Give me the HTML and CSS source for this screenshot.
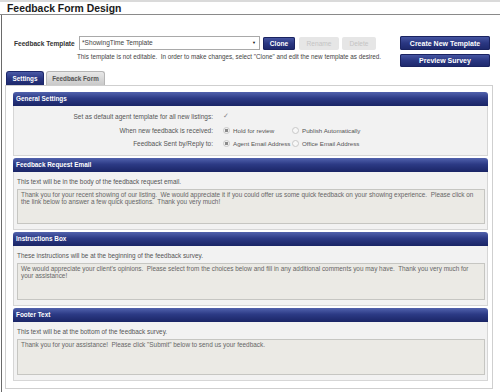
FILE: index.html
```html
<!DOCTYPE html>
<html lang="en">
<head>
    <meta charset="UTF-8">
    <meta name="viewport" content="width=device-width, initial-scale=1.0">
    <title>Feedback Form Design</title>
    <link rel="stylesheet" href="styles.css">
</head>
<body>
    <div class="page">
        <h1 class="page-title">Feedback Form Design</h1>
        <div class="content">
            <!-- template picker -->
            <div class="template-row">
                <div class="template-left">
                    <div class="template-pick">
                        <span class="template-label">Feedback Template</span>
                        <div class="select">*ShowingTime Template<span class="select-arrow">&#9660;</span></div>
                        <button class="btn">Clone</button>
                        <button class="btn btn-disabled btn-rename">Rename</button>
                        <button class="btn btn-disabled btn-delete">Delete</button>
                    </div>
                    <p class="note">This template is not editable.&nbsp; In order to make changes, select "Clone" and edit the new template as desired.</p>
                </div>
                <div class="template-actions">
                    <button class="btn btn-wide">Create New Template</button>
                    <button class="btn btn-wide">Preview Survey</button>
                </div>
            </div>

            <!-- tabs -->
            <div class="tabs">
                <div class="tab tab-active">Settings</div>
                <div class="tab">Feedback Form</div>
            </div>

            <div class="panel">
                <div class="section">
                    <div class="section-head">General Settings</div>
                    <div class="section-body settings">
                        <div class="settings-label">Set as default agent template for all new listings:</div>
                        <div class="settings-value"><span class="check"></span></div>
                        <div class="settings-label">When new feedback is received:</div>
                        <div class="settings-value">
                            <span class="radio radio-on"></span><span class="opt opt-first">Hold for review</span>
                            <span class="radio"></span><span class="opt">Publish Automatically</span>
                        </div>
                        <div class="settings-label">Feedback Sent by/Reply to:</div>
                        <div class="settings-value">
                            <span class="radio radio-on"></span><span class="opt opt-first">Agent Email Address</span>
                            <span class="radio"></span><span class="opt">Office Email Address</span>
                        </div>
                    </div>
                </div>

                <div class="section">
                    <div class="section-head">Feedback Request Email</div>
                    <div class="section-body">
                        <p class="hint">This text will be in the body of the feedback request email.</p>
                        <div class="textbox tb-email">Thank you for your recent showing of our listing.&nbsp; We would appreciate it if you could offer us some quick feedback on your showing experience.&nbsp; Please click on the link below to answer a few quick questions.&nbsp; Thank you very much!</div>
                    </div>
                </div>

                <div class="section">
                    <div class="section-head">Instructions Box</div>
                    <div class="section-body">
                        <p class="hint">These instructions will be at the beginning of the feedback survey.</p>
                        <div class="textbox tb-instr">We would appreciate your client's opinions.&nbsp; Please select from the choices below and fill in any additional comments you may have.&nbsp; Thank you very much for your assistance!</div>
                    </div>
                </div>

                <div class="section">
                    <div class="section-head">Footer Text</div>
                    <div class="section-body">
                        <p class="hint">This text will be at the bottom of the feedback survey.</p>
                        <div class="textbox tb-footer">Thank you for your assistance!&nbsp; Please click "Submit" below to send us your feedback.</div>
                    </div>
                </div>
            </div>
        </div>
    </div>
</body>
</html>
```

FILE: styles.css
```css
/* base */
body {
    margin: 0;
    font-family: "Liberation Sans", Arial, sans-serif;
    background: #ffffff;
    color: #555;
}

.page {
    border-top: 2px solid #dadada;
}

.page-title {
    margin: 0;
    height: 12px;
    padding-left: 7px;
    font-size: 10.4px;
    line-height: 13px;
    font-weight: bold;
    color: #1a1a1a;
    border-bottom: 1px solid #8a8a8a;
}

.content {
    margin-left: 1px;
    border-left: 1px solid #6a6a6a;
    padding: 21px 0 4px 3px;
}

/* template row */
.template-row {
    display: flex;
    align-items: flex-start;
}

.template-left {
    margin-left: 9px;
    width: 384px;
}

.template-pick {
    display: flex;
    align-items: center;
    height: 14px;
}

.template-label {
    font-size: 6.6px;
    font-weight: bold;
    color: #333;
    width: 65px;
}

.select {
    position: relative;
    width: 177px;
    height: 12px;
    border: 1px solid #a9a9a9;
    background: #fff;
    font-size: 6.6px;
    line-height: 12px;
    padding-left: 2px;
    color: #444;
    box-sizing: content-box;
}

.select-arrow {
    position: absolute;
    right: 3px;
    top: 0;
    font-size: 4px;
    color: #111;
}

.btn {
    border: none;
    border-radius: 2px;
    font-family: "Liberation Sans", Arial, sans-serif;
    font-size: 6.6px;
    font-weight: bold;
    color: #fff;
    background: linear-gradient(#4a5aa6, #2a3782 50%, #1c276a);
    height: 13px;
    padding: 0;
    margin-left: 3px;
    width: 32px;
    box-shadow: 0 0 0 1px #1a2360 inset;
}

.btn-disabled {
    background: #e6e6e6;
    color: #c4c4c4;
    box-shadow: none;
    font-weight: normal;
}

.btn-rename {
    width: 40px;
    margin-left: 4px;
}

.btn-delete {
    width: 34px;
}

.note {
    margin: 3px 0 0 63px;
    font-size: 6.3px;
    line-height: 8px;
    color: #444;
    white-space: nowrap;
}

.template-actions {
    display: flex;
    flex-direction: column;
    gap: 4px;
    margin-left: 2px;
}

.btn-wide {
    width: 90px;
    height: 14px;
    margin-left: 0;
    font-size: 7px;
}

.btn-wide + .btn-wide {
    height: 13px;
}

/* tabs */
.tabs {
    display: flex;
    gap: 2px;
    margin: 4px 0 0 1px;
}

.tab {
    height: 14px;
    line-height: 14px;
    width: 59px;
    text-align: center;
    font-size: 6.3px;
    font-weight: bold;
    color: #555;
    border-radius: 3px 3px 0 0;
    background: linear-gradient(#e8e8e8, #c9c9c9);
    border: 1px solid #b5b5b5;
    border-bottom: none;
    box-sizing: border-box;
}

.tab-active {
    width: 38px;
    color: #fff;
    background: linear-gradient(#4a5aa6, #2a3782 50%, #1c276a);
    border-color: #1c276a;
}

/* main panel */
.panel {
    width: 488px;
    box-sizing: border-box;
    border: 1px solid #cfcfcf;
    padding: 6px 4px 7px 7px;
}

.section + .section {
    margin-top: 2px;
}

.section-head {
    height: 14px;
    line-height: 13px;
    padding-left: 3px;
    font-size: 6.4px;
    font-weight: bold;
    color: #fff;
    border-radius: 3px 3px 0 0;
    background: linear-gradient(#5162ad, #2c3a85 45%, #1a2566);
}

.section-body {
    background: #f2f2f2;
    border: 1px solid #d6d6d6;
    border-top: none;
    padding: 5px 2px 5px 3px;
}

.hint {
    margin: 0;
    font-size: 6.4px;
    line-height: 9px;
    color: #555;
}

.textbox {
    margin-top: 3px;
    background: #ebeae5;
    border: 1px solid #c6c6c2;
    padding: 1px 3px;
    font-size: 6.4px;
    line-height: 7px;
    color: #666;
    box-sizing: border-box;
}

.tb-email {
    height: 35px;
}

.tb-instr {
    height: 37px;
}

.tb-footer {
    height: 36px;
}

/* general settings grid */
.settings {
    display: grid;
    grid-template-columns: 196px 1fr;
    grid-auto-rows: 13.5px;
    column-gap: 10px;
    padding-top: 4px;
    padding-bottom: 4px;
    font-size: 6.5px;
}

.settings-label {
    text-align: right;
    line-height: 13.5px;
    color: #555;
    white-space: nowrap;
}

.settings-value {
    display: flex;
    align-items: center;
    color: #555;
    white-space: nowrap;
}

.check {
    display: inline-block;
    width: 6px;
    height: 6px;
    position: relative;
}

.check::after {
    content: "\2713";
    position: absolute;
    left: 0;
    top: -2px;
    font-size: 7px;
    color: #888;
}

.radio {
    flex: none;
    display: inline-block;
    width: 5px;
    height: 5px;
    border-radius: 50%;
    border: 1px solid #c8c8c8;
    background: #f7f7f7;
    box-sizing: content-box;
}

.radio-on {
    background: radial-gradient(circle, #8a8a8a 0 1.5px, #f2f2f2 2px);
}

.opt {
    flex: none;
    margin-left: 3px;
    font-size: 6.2px;
}

.opt-first {
    width: 59px;
}
```
